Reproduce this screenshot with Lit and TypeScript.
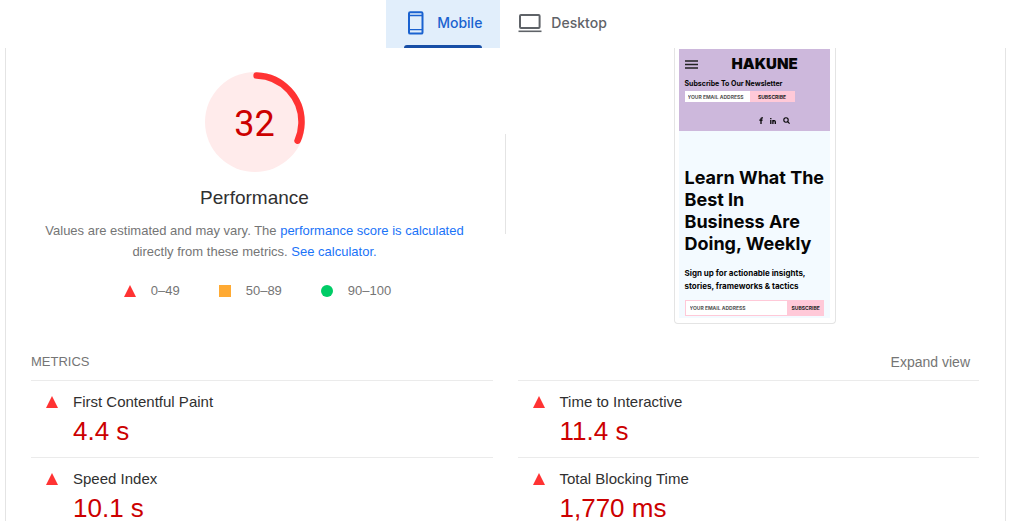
import { LitElement, html, svg, css } from "lit";
import { customElement, property, state } from "lit/decorators.js";

const mobileIcon = html`<svg width="16" height="24" viewBox="0 0 16 24" fill="none" stroke="currentColor" stroke-width="2" aria-hidden="true">
  <rect x="1" y="1.2" width="13.5" height="21.4" rx="1.2"></rect>
  <path d="M1 4.5h13.5M1 18.6h13.5" stroke-width="1.4"></path>
</svg>`;

const desktopIcon = html`<svg width="24" height="20" viewBox="0 0 24 20" fill="none" stroke="currentColor" stroke-width="2" aria-hidden="true">
  <rect x="2" y="2" width="19.6" height="13" rx="1"></rect>
  <path d="M0.5 18.3h23" stroke-width="1.6"></path>
</svg>`;

const shapes: Record<string, unknown> = {
  fail: svg`<path d="M6 0 12 12H0Z" fill="#ff3333"></path>`,
  average: svg`<rect width="12" height="12" fill="#ffaa33"></rect>`,
  pass: svg`<circle cx="6" cy="6" r="6" fill="#00cc66"></circle>`,
};

@customElement("rating-mark")
class RatingMark extends LitElement {
  @property() rating = "fail";

  static styles = css`
    :host {
      display: block;
      width: 12px;
      height: 12px;
      flex: none;
    }
    svg {
      display: block;
    }
  `;

  render() {
    return html`<svg width="12" height="12" viewBox="0 0 12 12" aria-hidden="true">${shapes[this.rating]}</svg>`;
  }
}

@customElement("score-gauge")
class ScoreGauge extends LitElement {
  @property({ type: Number }) score = 0;

  static styles = css`
    :host {
      display: grid;
      width: 100px;
      height: 100px;
    }
    svg,
    .score {
      grid-area: 1 / 1;
    }
    .base {
      fill: #ffebeb;
    }
    .arc {
      fill: none;
      stroke: #ff3333;
      stroke-width: 6.5;
      stroke-linecap: round;
    }
    .score {
      place-self: center;
      font: 36px/40px Roboto, sans-serif;
      color: #cc0000;
      padding-top: 3px;
    }
  `;

  render() {
    const length = 2 * Math.PI * 46.5;
    const filled = (length * (this.score - 1)) / 100;
    return html`
      <svg width="100" height="100" viewBox="0 0 100 100" aria-hidden="true">
        <circle class="base" cx="50" cy="50" r="50"></circle>
        <circle class="arc" cx="50" cy="50" r="46.5" transform="rotate(-88 50 50)" stroke-dasharray="${filled} ${length}"></circle>
      </svg>
      <span class="score">${this.score}</span>
    `;
  }
}

@customElement("page-preview")
class PagePreview extends LitElement {
  static styles = css`
    :host {
      display: block;
      box-sizing: border-box;
      width: 162px;
      padding: 1px 5px 5px 4px;
      border: 1px solid #e4e4e4;
      border-top: 0;
      border-radius: 0 0 4px 4px;
      font-family: Inter, sans-serif;
      color: #050505;
    }
    .head {
      background: #cdb8dc;
      height: 82px;
      padding: 0 6px;
      overflow: hidden;
    }
    .brand {
      display: flex;
      align-items: center;
      gap: 34px;
      height: 30px;
    }
    .menu {
      display: block;
      border: 0;
      padding: 0;
      background: none;
    }
    .menu svg,
    .social svg {
      display: block;
    }
    .name {
      font-size: 15px;
      line-height: 20px;
      font-weight: 900;
    }
    .label {
      display: block;
      font-size: 7px;
      line-height: 10px;
      font-weight: 700;
    }
    form {
      display: flex;
      margin: 0;
    }
    input,
    form button {
      box-sizing: border-box;
      min-width: 0;
      border: 0;
      border-radius: 0;
      padding: 0 3px;
      font-family: inherit;
      font-size: 5px;
      font-weight: 700;
      line-height: 10px;
    }
    input {
      flex: 1;
      background: #fff;
    }
    input::placeholder {
      color: #555;
      opacity: 1;
    }
    form button {
      background: #ffc9d8;
      color: #222;
      width: 45px;
      white-space: nowrap;
    }
    .small {
      width: 110px;
      height: 11px;
      margin-top: 2px;
    }
    .social {
      display: flex;
      align-items: center;
      justify-content: center;
      gap: 7px;
      padding: 15px 0 0 40px;
    }
    .social a {
      color: inherit;
    }
    .body {
      background: #f3faff;
      padding: 36px 6px 2px;
    }
    h2 {
      margin: 0;
      font-size: 18px;
      line-height: 22px;
      font-weight: 700;
      white-space: nowrap;
    }
    p {
      margin: 12px 0 0;
      font-size: 8px;
      line-height: 13px;
      font-weight: 700;
      white-space: nowrap;
    }
    .large {
      height: 16px;
      margin-top: 7px;
    }
    .large input {
      border: 1px solid #ffc9d8;
      padding-left: 4px;
    }
    .large button {
      width: 36px;
      padding: 0 4px;
    }
  `;

  render() {
    return html`
      <div class="head">
        <div class="brand">
          <button class="menu" aria-label="Menu">
            <svg width="13" height="9" viewBox="0 0 13 9" stroke="#222" stroke-width="1.4"><path d="M0 1h13M0 4.5h13M0 8h13"></path></svg>
          </button>
          <span class="name">HAKUNE</span>
        </div>
        <label class="label" for="top-email">Subscribe To Our Newsletter</label>
        <form class="small">
          <input id="top-email" type="email" placeholder="YOUR EMAIL ADDRESS" />
          <button type="button">SUBSCRIBE</button>
        </form>
        <div class="social">
          <a href="#" aria-label="Facebook"><svg width="4" height="7" viewBox="0 0 4 7" fill="none" stroke="currentColor" stroke-width="1.3"><path d="M4 .8H3Q2 .8 2 1.8V7M.3 3.1h3.3"></path></svg></a>
          <a href="#" aria-label="LinkedIn"><svg width="6" height="6" viewBox="0 0 6 6" fill="none" stroke="currentColor" stroke-width="1.3"><path d="M.8 2v4M.8 0v1.3M2.9 2v4M2.9 3.6Q3.2 2.6 4.2 2.6T5.3 3.8V6"></path></svg></a>
          <a href="#" aria-label="Search"><svg width="7" height="7" viewBox="0 0 7 7" fill="none" stroke="currentColor" stroke-width="1.1"><circle cx="3" cy="3" r="2.2"></circle><path d="M4.6 4.6 6.6 6.6"></path></svg></a>
        </div>
      </div>
      <div class="body">
        <h2>Learn What The<br />Best In<br />Business Are<br />Doing, Weekly</h2>
        <p>Sign up for actionable insights,<br />stories, frameworks &amp; tactics</p>
        <form class="large">
          <input type="email" aria-label="Your email address" placeholder="YOUR EMAIL ADDRESS" />
          <button type="button">SUBSCRIBE</button>
        </form>
      </div>
    `;
  }
}

@customElement("app-root")
class AppRoot extends LitElement {
  @state() device = "Mobile";

  private metrics = [
    ["First Contentful Paint", "4.4 s"],
    ["Time to Interactive", "11.4 s"],
    ["Speed Index", "10.1 s"],
    ["Total Blocking Time", "1,770 ms"],
  ];

  private legend = [
    ["fail", "0–49"],
    ["average", "50–89"],
    ["pass", "90–100"],
  ];

  static styles = css`
    :host {
      display: flex;
      flex-direction: column;
      box-sizing: border-box;
      height: 100vh;
      overflow: hidden;
      padding: 0 18px 0 5px;
      background: #fff;
      font-family: "Liberation Sans", Arial, sans-serif;
      color: #757575;
    }
    .tabs {
      display: flex;
      justify-content: center;
      flex: none;
      height: 48px;
    }
    .tab {
      display: flex;
      flex-direction: column;
      align-items: center;
      justify-content: space-between;
      border: 0;
      margin: 0;
      padding: 0 18px;
      background: none;
      color: #5f6368;
      font: 500 14px/20px Inter, sans-serif;
      cursor: pointer;
    }
    .face {
      display: flex;
      align-items: center;
      gap: 9px;
      height: 45px;
    }
    .tab svg {
      display: block;
    }
    .tab.active {
      background: #e1eefb;
      color: #1a62d0;
    }
    .tab.active .face {
      gap: 13px;
      padding-left: 4px;
    }
    .tab.active::after {
      content: "";
      width: 100%;
      height: 3px;
      border-radius: 3px 3px 0 0;
      background: #174ea6;
    }
    .card {
      flex: none;
      border: 1px solid #e4e4e4;
      border-width: 0 1px;
    }
    .overview {
      display: grid;
      grid-template-columns: 1fr 1px 1fr;
      height: 276px;
    }
    .category {
      display: flex;
      flex-direction: column;
      align-items: center;
      padding: 24px 2px 0 0;
    }
    h1 {
      margin: 13px 0 0;
      font-size: 19px;
      line-height: 26px;
      font-weight: 400;
      color: #303030;
    }
    .note {
      margin: 9px 0 0;
      font-size: 13px;
      line-height: 21px;
      max-width: 440px;
      text-align: center;
    }
    .note a {
      color: #1a73f8;
      text-decoration: none;
    }
    .legend {
      display: flex;
      gap: 39px;
      margin: 19px 0 0;
      padding: 0 0 0 6px;
      list-style: none;
      font-size: 13px;
      line-height: 20px;
    }
    .legend li {
      display: flex;
      align-items: center;
      gap: 15px;
    }
    .rule {
      height: 100px;
      margin-top: 86px;
      background: #e4e4e4;
    }
    .shot {
      display: flex;
      justify-content: center;
      align-items: flex-start;
      padding-right: 2px;
    }
    .metrics {
      padding: 0 26px 0 25px;
    }
    .bar {
      display: flex;
      justify-content: space-between;
      align-items: center;
      height: 56px;
      padding-right: 9px;
      box-sizing: border-box;
    }
    .title,
    .expand {
      margin: 0;
      padding: 20px 0 0;
      font-size: 13px;
      line-height: 18px;
      font-weight: 400;
    }
    .expand {
      border: 0;
      background: none;
      color: inherit;
      font-family: inherit;
      font-size: 14px;
      cursor: pointer;
    }
    .grid {
      display: grid;
      grid-template-columns: 1fr 1fr;
      column-gap: 25px;
    }
    .metric {
      display: grid;
      grid-template-columns: 12px 1fr;
      column-gap: 15px;
      box-sizing: border-box;
      height: 77px;
      padding: 11px 0 0 15px;
      border-top: 1px solid #ebebeb;
      align-content: start;
    }
    .metric rating-mark {
      padding-top: 4px;
    }
    .metric h3 {
      margin: 0;
      font-size: 15px;
      line-height: 20px;
      font-weight: 400;
      color: #303030;
    }
    .value {
      grid-column: 2;
      padding-top: 4px;
      font-size: 26px;
      line-height: 30px;
      color: #cc0000;
    }
  `;

  private tab(name: string, icon: unknown) {
    const active = this.device === name;
    return html`<button
      class="tab ${active ? "active" : ""}"
      role="tab"
      aria-selected=${active}
      @click=${() => (this.device = name)}
    ><span class="face">${icon}<span>${name}</span></span></button>`;
  }

  render() {
    return html`
      <div class="tabs" role="tablist">${this.tab("Mobile", mobileIcon)}${this.tab("Desktop", desktopIcon)}</div>
      <main class="card">
        <section class="overview">
          <div class="category">
            <score-gauge score="32"></score-gauge>
            <h1>Performance</h1>
            <p class="note">
              Values are estimated and may vary. The <a href="#">performance score is calculated</a> directly from these
              metrics. <a href="#">See calculator.</a>
            </p>
            <ul class="legend">
              ${this.legend.map(([rating, range]) => html`<li><rating-mark rating=${rating}></rating-mark>${range}</li>`)}
            </ul>
          </div>
          <div class="rule"></div>
          <div class="shot"><page-preview></page-preview></div>
        </section>
        <section class="metrics">
          <div class="bar">
            <h2 class="title">METRICS</h2>
            <button class="expand">Expand view</button>
          </div>
          <div class="grid">
            ${this.metrics.map(
              ([name, value]) => html`<div class="metric">
                <rating-mark rating="fail"></rating-mark>
                <h3>${name}</h3>
                <div class="value">${value}</div>
              </div>`,
            )}
          </div>
        </section>
      </main>
    `;
  }
}
